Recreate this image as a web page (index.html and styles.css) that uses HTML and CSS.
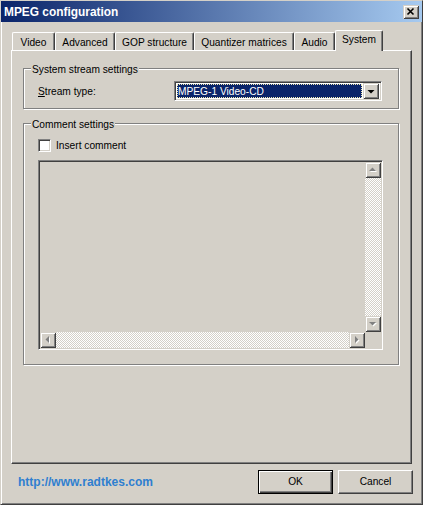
FILE: index.html
```html
<!DOCTYPE html>
<html lang="en">
<head>
    <meta charset="UTF-8">
    <meta name="viewport" content="width=device-width, initial-scale=1.0">
    <title>MPEG configuration</title>
    <link rel="stylesheet" href="styles.css">
</head>
<body>

<div class="window">
    <!-- Title bar -->
    <div class="titlebar">
        <span class="title">MPEG configuration</span>
        <div class="close-btn">
            <svg width="16" height="14" viewBox="0 0 16 14">
                <path d="M4.5 3.5 L10.5 9.5 M10.5 3.5 L4.5 9.5" stroke="#000" stroke-width="1.6" fill="none"/>
            </svg>
        </div>
    </div>

    <!-- Tabs -->
    <div class="tabs">
        <div class="tab tab-video">Video</div>
        <div class="tab tab-advanced">Advanced</div>
        <div class="tab tab-gop">GOP structure</div>
        <div class="tab tab-quant">Quantizer matrices</div>
        <div class="tab tab-audio">Audio</div>
        <div class="tab tab-system active">System</div>
    </div>

    <div class="panel">
        <!-- System stream settings -->
        <div class="group group-stream">
            <span class="legend">System stream settings</span>
            <div class="field-row">
                <span class="field-label"><u>S</u>tream type:</span>
                <div class="combo">
                    <div class="combo-value">MPEG-1 Video-CD</div>
                    <div class="combo-btn">
                        <svg width="16" height="16" viewBox="0 0 16 16">
                            <polygon points="4.5,7 11.5,7 8,10.5" fill="#000"/>
                        </svg>
                    </div>
                </div>
            </div>
        </div>

        <!-- Comment settings -->
        <div class="group group-comment">
            <span class="legend">Comment settings</span>
            <div class="check-row">
                <span class="checkbox"></span>
                <span>Insert comment</span>
            </div>
            <div class="memo">
                <div class="memo-text"></div>
                <div class="vscroll">
                    <div class="scroll-btn">
                        <svg width="16" height="16" viewBox="0 0 16 16">
                            <polygon points="5,10 12,10 8.5,6.5" fill="#fff"/>
                            <polygon points="4,9 11,9 7.5,5.5" fill="#808080"/>
                        </svg>
                    </div>
                    <div class="track"></div>
                    <div class="scroll-btn">
                        <svg width="16" height="16" viewBox="0 0 16 16">
                            <polygon points="5,7 12,7 8.5,10.5" fill="#fff"/>
                            <polygon points="4,6 11,6 7.5,9.5" fill="#808080"/>
                        </svg>
                    </div>
                </div>
                <div class="hscroll">
                    <div class="scroll-btn">
                        <svg width="16" height="16" viewBox="0 0 16 16">
                            <polygon points="10,5 10,12 6.5,8.5" fill="#fff"/>
                            <polygon points="9,4 9,11 5.5,7.5" fill="#808080"/>
                        </svg>
                    </div>
                    <div class="track"></div>
                    <div class="scroll-btn">
                        <svg width="16" height="16" viewBox="0 0 16 16">
                            <polygon points="7,5 7,12 10.5,8.5" fill="#fff"/>
                            <polygon points="6,4 6,11 9.5,7.5" fill="#808080"/>
                        </svg>
                    </div>
                </div>
                <div class="corner"></div>
            </div>
        </div>
    </div>

    <!-- Footer -->
    <div class="footer">
        <a class="site-link">http://www.radtkes.com</a>
        <div class="btn btn-default">OK</div>
        <div class="btn">Cancel</div>
    </div>
</div>

</body>
</html>
```

FILE: styles.css
```css
* {
    margin: 0;
    padding: 0;
    box-sizing: border-box;
}

body {
    font-family: 'Liberation Sans', Arial, sans-serif;
    font-size: 10.2px;
    color: #000;
    background: #d4d0c8;
    overflow: hidden;
}

.window {
    width: 423px;
    height: 505px;
    background: #d4d0c8;
    border: 1px solid;
    border-color: #d4d0c8 #404040 #404040 #d4d0c8;
    box-shadow: inset 1px 1px #fff, inset -1px -1px #808080;
    display: flex;
    flex-direction: column;
}

/* Title bar */
.titlebar {
    height: 21px;
    background: linear-gradient(to right, #0a246a, #a6caf0);
    display: flex;
    align-items: center;
    justify-content: space-between;
    padding-left: 3px;
    padding-right: 3px;
}

.title {
    color: #fff;
    font-weight: bold;
    font-size: 11.9px;
}

.close-btn {
    width: 16px;
    height: 14px;
    background: #d4d0c8;
    box-shadow: inset 1px 1px #d4d0c8, inset -1px -1px #404040, inset 2px 2px #fff, inset -2px -2px #808080;
    display: flex;
    margin-top: 1px;
}

/* Tabs */
.tabs {
    display: flex;
    align-items: flex-end;
    height: 20px;
    margin-top: 8px;
    margin-left: 11px;
}

.tab {
    height: 18px;
    padding-top: 3px;
    line-height: 13px;
    text-align: center;
    white-space: nowrap;
    background: #d4d0c8;
    border-top: 1px solid #fff;
    border-left: 1px solid #fff;
    border-right: 1px solid #404040;
    border-top-left-radius: 2px;
    border-top-right-radius: 2px;
    box-shadow: inset -1px 0 #808080;
}

.tab-video { width: 43px; }
.tab-advanced { width: 60px; }
.tab-gop { width: 79px; }
.tab-quant { width: 100px; }
.tab-audio { width: 41px; }

.tab.active {
    width: 48px;
    height: 21px;
    padding-top: 2px;
    margin-bottom: -1px;
    position: relative;
    z-index: 1;
}

/* Tab panel */
.panel {
    width: 401px;
    height: 414px;
    margin-left: 10px;
    border: 1px solid;
    border-color: #fff #404040 #404040 #fff;
    box-shadow: inset -1px -1px #808080;
    padding-left: 11px;
    padding-top: 17px;
}

.group {
    position: relative;
    width: 376px;
    border: 1px solid #808080;
    box-shadow: inset 1px 1px #fff, 1px 1px #fff;
}

.legend {
    position: absolute;
    top: -6px;
    left: 7px;
    padding: 0 1px;
    line-height: 13px;
    background: #d4d0c8;
}

.group-stream {
    height: 41px;
}

.field-row {
    display: flex;
    align-items: center;
    margin-top: 12px;
    padding-left: 14px;
}

.field-label {
    width: 136px;
    padding-top: 1px;
}

.combo {
    width: 208px;
    height: 20px;
    background: #fff;
    border: 1px solid;
    border-color: #808080 #fff #fff #808080;
    box-shadow: inset 1px 1px #404040, inset -1px -1px #d4d0c8;
    padding: 2px;
    display: flex;
}

.combo-value {
    flex: 1;
    background: #0a246a;
    color: #fff;
    line-height: 15px;
    padding-left: 1px;
    outline: 1px dotted #f0e8b0;
    outline-offset: -1px;
    margin-right: 1px;
}

.combo-btn {
    width: 16px;
    height: 16px;
    margin-top: -1px;
    background: #d4d0c8;
    box-shadow: inset 1px 1px #d4d0c8, inset -1px -1px #404040, inset 2px 2px #fff, inset -2px -2px #808080;
}

.group-comment {
    height: 242px;
    margin-top: 14px;
}

.check-row {
    display: flex;
    align-items: center;
    gap: 5px;
    height: 13px;
    margin-top: 15px;
    padding-left: 14px;
}

.checkbox {
    width: 13px;
    height: 13px;
    background: #fff;
    border: 1px solid;
    border-color: #808080 #fff #fff #808080;
    box-shadow: inset 1px 1px #404040, inset -1px -1px #d4d0c8;
}

.memo {
    width: 345px;
    height: 190px;
    margin-top: 8px;
    margin-left: 14px;
    border: 1px solid;
    border-color: #808080 #fff #fff #808080;
    box-shadow: inset 1px 1px #404040, inset -1px -1px #d4d0c8;
    padding: 1px;
    display: grid;
    grid-template-columns: 1fr 16px;
    grid-template-rows: 1fr 16px;
}

.memo-text {
    background: #d4d0c8;
}

.vscroll {
    display: flex;
    flex-direction: column;
}

.hscroll {
    display: flex;
}

.track {
    flex: 1;
    background: repeating-conic-gradient(#fff 0 25%, #d4d0c8 0 50%) 0 0 / 2px 2px;
}

.scroll-btn {
    width: 16px;
    height: 16px;
    flex-shrink: 0;
    background: #d4d0c8;
    box-shadow: inset 1px 1px #d4d0c8, inset -1px -1px #404040, inset 2px 2px #fff, inset -2px -2px #808080;
}

.scroll-btn svg {
    display: block;
}

.corner {
    background: #d4d0c8;
}

/* Footer */
.footer {
    display: flex;
    align-items: center;
    gap: 5px;
    margin-top: 6px;
    padding-left: 17px;
    padding-right: 9px;
}

.site-link {
    margin-right: auto;
    color: #2f7fd0;
    font-weight: bold;
    font-size: 12px;
}

.btn {
    width: 75px;
    height: 24px;
    line-height: 22px;
    text-align: center;
    background: #d4d0c8;
    border: 1px solid;
    border-color: #fff #404040 #404040 #fff;
    box-shadow: inset -1px -1px #808080;
}

.btn-default {
    border-color: #000;
    box-shadow: inset 1px 1px #fff, inset -1px -1px #404040, inset -2px -2px #808080;
}
```
